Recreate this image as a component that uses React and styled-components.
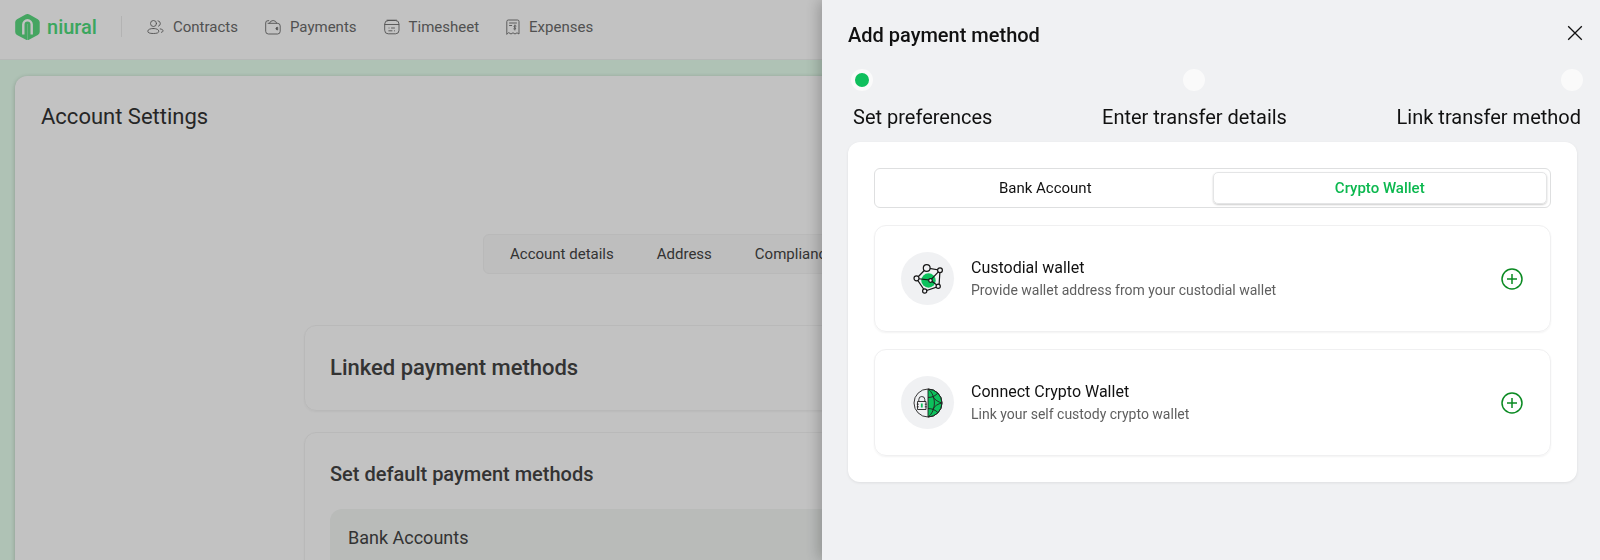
import styled, { createGlobalStyle } from 'styled-components';

const GlobalStyle = createGlobalStyle`
  * {
    box-sizing: border-box;
  }

  body {
    margin: 0;
    overflow: hidden;
    background-color: #e6ffee;
    font-family: Roboto, 'Liberation Sans', sans-serif;
    font-size: 16px;
    color: #111;
  }

  h1, h2, h3, p, ol {
    margin: 0;
    padding: 0;
  }

  button {
    font-family: inherit;
    padding: 0;
    border: none;
    background: none;
    cursor: pointer;
  }
`;

const Page = styled.div`
  height: 100vh;
  overflow: hidden;
`;

const Header = styled.header`
  display: flex;
  align-items: center;
  height: 60px;
  padding: 0 16px 6px 15px;
  background-color: #fff;
  border-bottom: 1px solid #f0f2f1;
`;

const Logo = styled.a`
  display: flex;
  align-items: center;
  gap: 7px;
  color: #4edb7c;
  font-size: 20px;
  line-height: 26px;
  font-weight: 500;
  text-decoration: none;
`;

const LogoText = styled.span`
  width: 50px;
`;

const Divider = styled.span`
  width: 1px;
  height: 21px;
  margin: 0 25px 0 24px;
  background-color: #ececec;
`;

const Nav = styled.nav`
  display: flex;
  align-items: center;
  gap: 27px;
`;

const NavLink = styled.a`
  display: flex;
  align-items: center;
  gap: 9px;
  color: #6b6b6b;
  font-size: 15px;
  line-height: 20px;
  text-decoration: none;
`;

const Main = styled.main`
  min-height: 100vh;
  margin: 16px 15px;
  padding: 26px;
  background-color: #fff;
  border-radius: 12px;
  box-shadow: 0 1px 4px rgba(0 0 0 / 22%);
`;

const PageTitle = styled.h1`
  color: #333;
  font-size: 22px;
  line-height: 30px;
  font-weight: 400;
`;

const Tabs = styled.div`
  display: flex;
  align-items: center;
  gap: 43px;
  width: 634px;
  height: 40px;
  margin: 102px auto 51px;
  padding: 0 26px;
  background-color: #fafafa;
  border: 1px solid #f4f4f4;
  border-radius: 6px;
`;

const Tab = styled.button`
  color: #444;
  font-size: 15px;
  line-height: 20px;
`;

const Content = styled.div`
  display: flex;
  flex-direction: column;
  gap: 21px;
  max-width: 992px;
  margin: 0 auto;
`;

const Card = styled.section`
  padding: 25px;
  border: 1px solid #f4f4f4;
  border-radius: 12px;
  box-shadow: 0 1px 2px rgba(0 0 0 / 4%);
`;

const CardTitle = styled.h2`
  color: #444;
  font-size: ${(props) => (props.$small ? '20px' : '22px')};
  line-height: ${(props) => (props.$small ? '32px' : '34px')};
  font-weight: 500;
`;

const AccountsBox = styled.div`
  min-height: 160px;
  margin-top: 19px;
  padding: 16px 18px;
  background-color: #f3f6f4;
  border-radius: 12px;
`;

const AccountsTitle = styled.h3`
  color: #444;
  font-size: 18px;
  line-height: 26px;
  font-weight: 400;
`;

const Overlay = styled.div`
  position: fixed;
  inset: 0;
  background-color: rgba(0 0 0 / 24%);
`;

const Drawer = styled.aside`
  position: fixed;
  top: 0;
  right: 0;
  bottom: 0;
  width: 778px;
  max-width: 100%;
  padding: 17px 17px 26px 26px;
  background-color: #f0f1f3;
  box-shadow: -3px 0 14px rgba(0 0 0 / 24%);
`;

const DrawerHeader = styled.div`
  display: flex;
  justify-content: space-between;
  height: 52px;
`;

const DrawerTitle = styled.h2`
  color: #111;
  font-size: 20px;
  line-height: 36px;
  font-weight: 500;
`;

const CloseButton = styled.button`
  display: flex;
  align-items: center;
  height: 32px;
`;

const Steps = styled.ol`
  display: flex;
  justify-content: space-between;
  padding-left: 3px;
  list-style: none;
`;

const Step = styled.li`
  display: flex;
  flex-direction: column;
  align-items: ${(props) => props.$align};
  gap: 10px;
  color: #111;
  font-size: 20px;
  line-height: 32px;
`;

const StepLabel = styled.span`
  padding: 0 2px;
`;

const StepDot = styled.span`
  width: 22px;
  height: 22px;
  background-color: ${(props) => (props.$active ? '#0fbf5c' : '#fafafa')};
  border: 4px solid #fafafa;
  border-radius: 50%;
`;

const Panel = styled.div`
  display: flex;
  flex-direction: column;
  gap: 17px;
  margin: 9px 6px 0 0;
  padding: 26px;
  background-color: #fff;
  border-radius: 12px;
  box-shadow: 0 1px 3px rgba(0 0 0 / 8%);
`;

const Segmented = styled.div`
  display: grid;
  grid-template-columns: 1fr 1fr;
  height: 40px;
  padding: 3px;
  border: 1px solid #dedfe0;
  border-radius: 6px;
`;

const Segment = styled.button`
  color: ${(props) => (props.$active ? '#0cb84f' : '#111')};
  font-size: 15px;
  line-height: 20px;
  font-weight: ${(props) => (props.$active ? 500 : 400)};
  border: 1px solid ${(props) => (props.$active ? '#e4e5e6' : 'transparent')};
  border-radius: 5px;
  box-shadow: ${(props) => (props.$active ? '0 1px 2px rgba(0 0 0 / 20%)' : 'none')};
`;

const Option = styled.div`
  display: flex;
  align-items: center;
  gap: 17px;
  height: 107px;
  padding: 0 27px 0 26px;
  border: 1px solid #f0f0f1;
  border-radius: 12px;
  box-shadow: 0 1px 2px rgba(0 0 0 / 5%);
`;

const OptionIcon = styled.div`
  display: grid;
  place-items: center;
  width: 53px;
  height: 53px;
  background-color: #f0f1f3;
  border-radius: 50%;
`;

const OptionText = styled.div`
  flex: 1;
`;

const OptionTitle = styled.h3`
  color: #111;
  font-size: 16px;
  line-height: 22px;
  font-weight: 400;
`;

const OptionInfo = styled.p`
  color: #5f5f5f;
  font-size: 14px;
  line-height: 22px;
`;

const AddButton = styled.button`
  display: flex;
`;

const LogoMark = () => (
  <svg width="25" height="26" viewBox="0 0 25 26" fill="none">
    <path
      d="M10.6.5a4 4 0 0 1 3.8 0l8.4 4.7A3.6 3.6 0 0 1 24.7 8v10a3.6 3.6 0 0 1-1.9 3l-8.4 4.6a4 4 0 0 1-3.8 0L2 21a3.6 3.6 0 0 1-1.8-3V8A3.6 3.6 0 0 1 2 5.200z"
      fill="#5bd980"
    />
    <path d="M8.300 20.500V10.500a4.200 4.200 0 0 1 8.400 0V20.500" stroke="#fff" strokeWidth="2.400" />
    <path d="M12.500 10V26" stroke="#fff" strokeWidth="1" strokeOpacity=".3" />
  </svg>
);

const NavIcon = ({ children, width = 16 }) => (
  <svg
    width={width}
    height="16"
    viewBox={`0 0 ${width} 16`}
    fill="none"
    stroke="currentColor"
    strokeWidth=".9"
    strokeLinecap="round"
    strokeLinejoin="round"
  >
    {children}
  </svg>
);

const ContractsIcon = () => (
  <NavIcon width={17}>
    <circle cx="6.500" cy="4.500" r="3" />
    <path d="M6.300 9.500C3 9.500.8 10.600.8 12.200s1.700 2.300 5.500 2.300 5.500-.7 5.500-2.300-2.200-2.700-5.500-2.700z" />
    <path d="M11 1.800a2.800 2.800 0 0 1 .5 5.400M13.200 9.900c1.800.3 2.900 1 2.900 1.900 0 .7-.6 1.200-1.700 1.500" />
  </NavIcon>
);

const PaymentsIcon = () => (
  <NavIcon>
    <path d="M3.800 1.700H3A2.200 2.200 0 0 0 .7 4v8.300A2.700 2.700 0 0 0 3.400 15h9.100a2.700 2.700 0 0 0 2.700-2.700V7a2.700 2.700 0 0 0-2.700-2.700H3" />
    <path d="M4.400 4.200a3.900 3.900 0 0 1 7.400 0" />
    <path d="M12.300 8.300a1.300 1.300 0 1 0 0 2.600z" fill="currentColor" />
  </NavIcon>
);

const TimesheetIcon = () => (
  <NavIcon>
    <rect x=".7" y="1.500" width="14.300" height="13.300" rx="3.500" />
    <path d="M3 1.200h9.500M1 5.500h13.700M5 9h.1M7.500 9h3M4.800 11.800h3.200M10.500 11.800h.1" />
  </NavIcon>
);

const ExpensesIcon = () => (
  <NavIcon width={14}>
    <path d="M.8 15V2.500A1.500 1.500 0 0 1 2.300 1h9.200A1.500 1.500 0 0 1 13 2.500V15l-2-1.200-2 1.200-2-1.200L5 15l-2.100-1.200z" />
    <path d="M3.500 4h7M3.500 6.500h2.200M10 7c-2-.8-2.700.9-1.400 1.400s1.800 2-.8 1.500M8.900 6v5" />
  </NavIcon>
);

const CloseIcon = () => (
  <svg width="16" height="16" viewBox="0 0 16 16" stroke="#111" strokeWidth="1.300">
    <path d="M1.200 1.200 14.800 14.800M14.800 1.200 1.200 14.800" />
  </svg>
);

const NetworkIcon = () => (
  <svg width="30" height="30" viewBox="0 0 30 30" fill="#f0f1f3" stroke="#161616" strokeWidth="1.200">
    <circle cx="15.500" cy="16.500" r="7.200" fill="#0cc15c" stroke="none" />
    <path d="M3.500 14.500 13.700 4 27 6.200 26 22.300 12 27z" fill="none" />
    <path d="M3.500 14.500 17.500 16.200 27 6.200M17.500 16.200 25.500 22.300" fill="none" />
    <circle cx="13.700" cy="4" r="3.400" />
    <circle cx="27" cy="6.200" r="2.400" />
    <circle cx="3.500" cy="14.300" r="2.500" />
    <circle cx="17.500" cy="16.500" r="1.800" />
    <circle cx="25.200" cy="22.300" r="2.100" />
    <circle cx="11.700" cy="27" r="2.100" />
  </svg>
);

const GlobeLockIcon = () => (
  <svg width="30" height="30" viewBox="0 0 30 30" fill="none" stroke="#222" strokeWidth=".9">
    <path d="M15 1a14 14 0 0 1 0 28z" fill="#0cc15c" />
    <circle cx="15" cy="15" r="14" />
    <path d="M15 1C23.500 7 23.500 23 15 29M15 9.500c4 0 7.500-1.500 9.800-4.500M19.500 8.500c2.500 3.500 6 5.700 9.500 6.500M29 15c-4 .7-7.500 3-9.500 6.500M15 20.500c4 0 7.500 1.500 9.800 4" />
    <path d="M4.500 13.500h8.500v8H4.500zM5.800 13.500v-2a3 3 0 0 1 6 0v2" />
    <path d="M3.800 16.200h2M3.800 18.800h2M11.800 16.200h2M11.800 18.800h2" />
    <path d="M8.800 15.500v4" stroke="#0cc15c" strokeWidth="1.800" />
  </svg>
);

const PlusIcon = () => (
  <svg width="22" height="22" viewBox="0 0 22 22" fill="none" stroke="#0a8a22" strokeWidth="1.500">
    <circle cx="11" cy="11" r="10" />
    <path d="M11 6v10M6 11h10" />
  </svg>
);

const navItems = [
  { label: 'Contracts', Icon: ContractsIcon },
  { label: 'Payments', Icon: PaymentsIcon },
  { label: 'Timesheet', Icon: TimesheetIcon },
  { label: 'Expenses', Icon: ExpensesIcon },
];

const tabs = ['Account details', 'Address', 'Compliance'];

const steps = [
  { label: 'Set preferences', align: 'flex-start', active: true },
  { label: 'Enter transfer details', align: 'center' },
  { label: 'Link transfer method', align: 'flex-end' },
];

const options = [
  {
    title: 'Custodial wallet',
    info: 'Provide wallet address from your custodial wallet',
    Icon: NetworkIcon,
  },
  {
    title: 'Connect Crypto Wallet',
    info: 'Link your self custody crypto wallet',
    Icon: GlobeLockIcon,
  },
];

const App = () => {
  return (
    <Page>
      <GlobalStyle />
      <Header>
        <Logo href="#">
          <LogoMark />
          <LogoText>niural</LogoText>
        </Logo>
        <Divider />
        <Nav>
          {navItems.map(({ label, Icon }) => (
            <NavLink href="#" key={label}>
              <Icon />
              {label}
            </NavLink>
          ))}
        </Nav>
      </Header>

      <Main>
        <PageTitle>Account Settings</PageTitle>
        <Tabs>
          {tabs.map((tab) => (
            <Tab key={tab}>{tab}</Tab>
          ))}
        </Tabs>
        <Content>
          <Card>
            <CardTitle>Linked payment methods</CardTitle>
          </Card>
          <Card>
            <CardTitle $small>Set default payment methods</CardTitle>
            <AccountsBox>
              <AccountsTitle>Bank Accounts</AccountsTitle>
            </AccountsBox>
          </Card>
        </Content>
      </Main>

      <Overlay />
      <Drawer role="dialog" aria-labelledby="drawer-title">
        <DrawerHeader>
          <DrawerTitle id="drawer-title">Add payment method</DrawerTitle>
          <CloseButton aria-label="Close">
            <CloseIcon />
          </CloseButton>
        </DrawerHeader>
        <Steps>
          {steps.map(({ label, align, active }) => (
            <Step key={label} $align={align}>
              <StepDot $active={active} />
              <StepLabel>{label}</StepLabel>
            </Step>
          ))}
        </Steps>
        <Panel>
          <Segmented>
            <Segment>Bank Account</Segment>
            <Segment $active>Crypto Wallet</Segment>
          </Segmented>
          {options.map(({ title, info, Icon }) => (
            <Option key={title}>
              <OptionIcon>
                <Icon />
              </OptionIcon>
              <OptionText>
                <OptionTitle>{title}</OptionTitle>
                <OptionInfo>{info}</OptionInfo>
              </OptionText>
              <AddButton aria-label={`Add ${title}`}>
                <PlusIcon />
              </AddButton>
            </Option>
          ))}
        </Panel>
      </Drawer>
    </Page>
  );
};

export default App;
